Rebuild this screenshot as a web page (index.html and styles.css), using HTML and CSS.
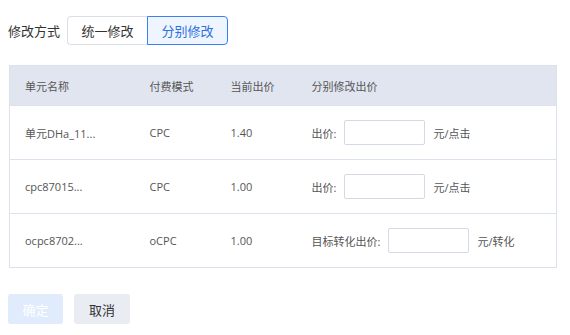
FILE: index.html
```html
<!DOCTYPE html>
<html lang="zh-CN">
<head>
    <meta charset="UTF-8">
    <title>分别修改出价</title>
    <link rel="stylesheet" href="styles.css">
</head>
<body>
    <div class="page">
        <div class="mode-row">
            <span class="mode-label">修改方式</span>
            <div class="segment">
                <button class="seg-btn">统一修改</button>
                <button class="seg-btn active">分别修改</button>
            </div>
        </div>

        <table class="bid-table">
            <thead>
                <tr>
                    <th class="col-name">单元名称</th>
                    <th class="col-mode">付费模式</th>
                    <th class="col-price">当前出价</th>
                    <th>分别修改出价</th>
                </tr>
            </thead>
            <tbody>
                <tr>
                    <td>单元DHa_11...</td>
                    <td>CPC</td>
                    <td>1.40</td>
                    <td>
                        <div class="bid-edit">
                            <span>出价:</span>
                            <input type="text" class="bid-input">
                            <span>元/点击</span>
                        </div>
                    </td>
                </tr>
                <tr>
                    <td>cpc87015...</td>
                    <td>CPC</td>
                    <td>1.00</td>
                    <td>
                        <div class="bid-edit">
                            <span>出价:</span>
                            <input type="text" class="bid-input">
                            <span>元/点击</span>
                        </div>
                    </td>
                </tr>
                <tr>
                    <td>ocpc8702...</td>
                    <td>oCPC</td>
                    <td>1.00</td>
                    <td>
                        <div class="bid-edit">
                            <span>目标转化出价:</span>
                            <input type="text" class="bid-input">
                            <span>元/转化</span>
                        </div>
                    </td>
                </tr>
            </tbody>
        </table>

        <div class="actions">
            <button class="btn btn-primary" disabled>确定</button>
            <button class="btn btn-cancel">取消</button>
        </div>
    </div>
</body>
</html>
```

FILE: styles.css
```css
* {
    margin: 0;
    padding: 0;
    box-sizing: border-box;
}

body {
    font-family: 'Open Sans', 'Noto Sans CJK SC', sans-serif;
    background: #fff;
    color: #333;
}

.page {
    padding: 16px 8px 0 8px;
}

.mode-row {
    display: flex;
    align-items: center;
    gap: 7px;
}

.mode-label {
    font-size: 13px;
    color: #333;
}

.segment {
    display: flex;
}

.seg-btn {
    font-family: inherit;
    font-size: 13px;
    height: 29px;
    width: 80px;
    background: #fff;
    color: #333;
    border: 1px solid #dcdfe6;
    cursor: pointer;
}

.seg-btn:first-child {
    border-radius: 4px 0 0 4px;
    border-right: none;
}

.seg-btn.active {
    width: 81px;
    background: #eef5ff;
    color: #2f6fdf;
    border-color: #3b7ff2;
    border-radius: 0 4px 4px 0;
}

.bid-table {
    margin: 20px 0 0 1px;
    width: 548px;
    border-collapse: collapse;
    border: 1px solid #dde1eb;
    font-size: 11px;
    color: #555;
}

.bid-table th {
    background: #e1e5f0;
    font-weight: normal;
    text-align: left;
    height: 40px;
    padding: 0 0 0 15px;
    color: #555;
}

.bid-table td {
    height: 54px;
    padding: 0 0 0 15px;
    border-top: 1px solid #dde1eb;
}

.col-name {
    width: 125px;
}

.col-mode,
.col-price {
    width: 81px;
}

.bid-edit {
    display: flex;
    align-items: center;
    gap: 8px;
}

.bid-input {
    width: 81px;
    height: 25px;
    border: 1px solid #d5d9e3;
    border-radius: 2px;
    outline: none;
}

.actions {
    display: flex;
    gap: 11px;
    margin-top: 26px;
}

.btn {
    font-family: inherit;
    font-size: 13px;
    height: 30px;
    border: none;
    border-radius: 3px;
}

.btn-primary {
    width: 55px;
    background: #e0ebfc;
    color: #fff;
}

.btn-cancel {
    width: 56px;
    background: #e9ecf3;
    color: #333;
    cursor: pointer;
}
```
